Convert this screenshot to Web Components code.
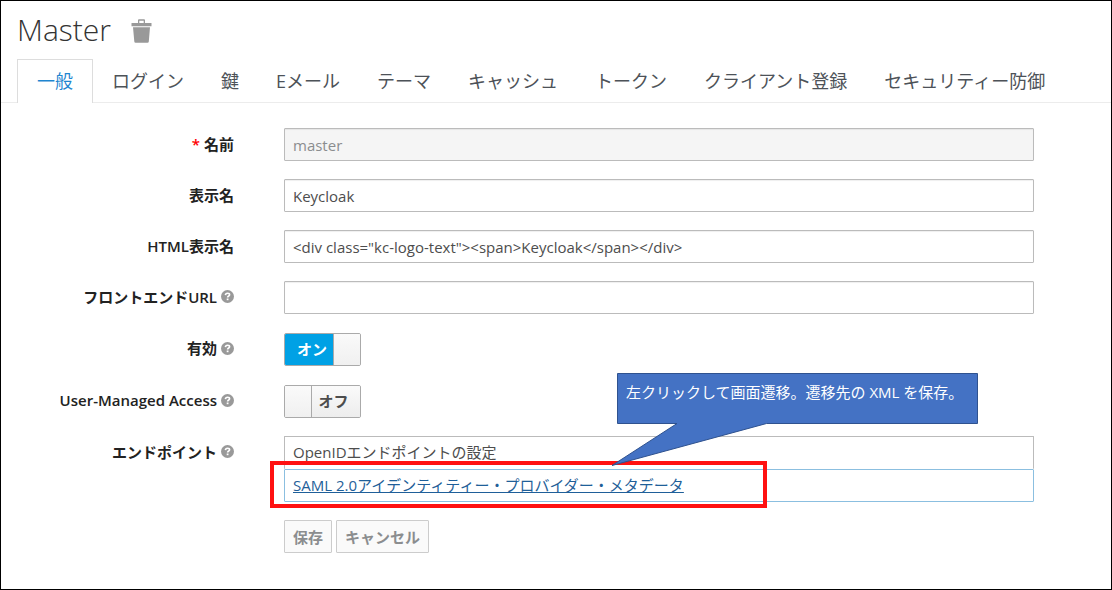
<!DOCTYPE html>
<html lang="ja">
<head>
<meta charset="utf-8">
<meta name="viewport" content="width=device-width, initial-scale=1">
<title>Master - Keycloak</title>
<style>
  html { height: 100%; }
  body {
    margin: 0;
    min-height: 100%;
    display: flex;
    background: #fff;
    color: #222;
    font: 15px/20px "Open Sans", "Noto Sans CJK JP", sans-serif;
  }
</style>
</head>
<body>
<kc-page>
  <kc-heading slot="head">Master</kc-heading>
  <kc-tabs slot="head">
    <kc-tab active>一般</kc-tab>
    <kc-tab>ログイン</kc-tab>
    <kc-tab>鍵</kc-tab>
    <kc-tab>Eメール</kc-tab>
    <kc-tab>テーマ</kc-tab>
    <kc-tab>キャッシュ</kc-tab>
    <kc-tab>トークン</kc-tab>
    <kc-tab>クライアント登録</kc-tab>
    <kc-tab>セキュリティー防御</kc-tab>
  </kc-tabs>
  <kc-text-field label="名前" value="master" required disabled></kc-text-field>
  <kc-text-field label="表示名" value="Keycloak"></kc-text-field>
  <kc-text-field label="HTML表示名" value="&lt;div class=&quot;kc-logo-text&quot;&gt;&lt;span&gt;Keycloak&lt;/span&gt;&lt;/div&gt;"></kc-text-field>
  <kc-text-field label="フロントエンドURL" value="" help></kc-text-field>
  <kc-switch-field label="有効" checked help></kc-switch-field>
  <kc-switch-field label="User-Managed Access" help></kc-switch-field>
  <kc-endpoints label="エンドポイント" help>
    <kc-endpoint>OpenIDエンドポイントの設定</kc-endpoint>
    <kc-endpoint marked>SAML 2.0アイデンティティー・プロバイダー・メタデータ
      <kc-callout slot="note">左クリックして画面遷移。遷移先の XML を保存。</kc-callout>
    </kc-endpoint>
  </kc-endpoints>
  <kc-actions>
    <kc-button>保存</kc-button>
    <kc-button>キャンセル</kc-button>
  </kc-actions>
</kc-page>

<script>
const define = (name, render, base = HTMLElement) =>
  customElements.define(name, class extends base {
    connectedCallback() {
      if (this.shadowRoot) return;
      const t = document.createElement('template');
      t.innerHTML = render(this);
      this.attachShadow({ mode: 'open' }).append(t.content.cloneNode(true));
    }
  });

const esc = s => (s || '').replace(/&/g, '&amp;').replace(/"/g, '&quot;').replace(/</g, '&lt;');

/* Shared two-column row: right-aligned label, then the control. */
const rowStyle = `
  :host { display: grid; grid-template-columns: 216px minmax(0, 1fr); column-gap: 50px; align-items: center; min-height: 33px; }
  *, *::before, *::after { box-sizing: border-box; }
  .label { display: flex; justify-content: flex-end; align-items: center; gap: 4px; min-height: 33px; padding-bottom: 2px; font-weight: 600; color: #222; }
  .label b { color: #f00; font-weight: 600; }
  .label svg { width: 13px; height: 13px; flex: none; }
`;
const labelText = el => `${el.hasAttribute('required') ? '<b>*</b>' : ''}<span>${esc(el.getAttribute('label'))}</span>${el.hasAttribute('help') ? `
  <svg viewBox="0 0 13 13" aria-hidden="true"><circle cx="6.5" cy="6.5" r="6.5" fill="#999"/><path d="M4.4 5.1C4.5 3.8 5.4 3.2 6.6 3.2 7.8 3.2 8.6 3.9 8.6 4.8 8.6 6.1 6.6 6 6.6 7.6" fill="none" stroke="#fff" stroke-width="1.6"/><rect x="5.7" y="8.5" width="1.8" height="1.7" fill="#fff"/></svg>` : ''}`;

define('kc-page', () => `
  <style>
    :host { flex: 1; display: block; box-sizing: border-box; border: 1px solid #000; }
    form { display: grid; row-gap: 18px; padding: 25px 77px 0 17px; }
  </style>
  <header><slot name="head"></slot></header>
  <form><slot></slot></form>`);

define('kc-heading', () => `
  <style>
    :host { display: flex; align-items: center; gap: 20px; padding: 9px 16px; }
    h1 { margin: 0; font-size: 30px; line-height: 40px; font-weight: 300; color: #333; }
    button { border: 0; padding: 2px 0 0; background: none; display: flex; }
    svg { width: 21px; height: 24px; }
  </style>
  <h1><slot></slot></h1>
  <button type="button" aria-label="削除"><svg viewBox="0 0 21 24"><path fill="#999" fill-rule="evenodd" d="M.5 4H7V1.3Q7 .3 8 .3H13Q14 .3 14 1.3V4H20.5V7.3H.5ZM8.3 1.8V4H12.7V1.8ZM2 8.3H19L17.8 22.5Q17.7 23.7 16.5 23.7H4.6Q3.4 23.7 3.3 22.5Z"/></svg></button>`);

define('kc-tabs', () => `
  <style>
    :host { display: block; padding-left: 16px; border-bottom: 1px solid #ececec; }
    nav { display: flex; gap: 1px; margin-bottom: -1px; }
  </style>
  <nav><slot></slot></nav>`);

define('kc-tab', () => `
  <style>
    :host { display: block; flex: none; }
    a { display: block; padding: 0 17px; border: 1px solid transparent; border-bottom: 0; font-size: 18px; line-height: 43px; color: #4d5258; text-decoration: none; white-space: nowrap; }
    :host([active]) a { padding: 0 19px; border-color: #ddd; background: #fff; color: #1f86d0; }
  </style>
  <a href="#"><slot></slot></a>`);

define('kc-text-field', el => `
  <style>${rowStyle}
    input { width: 100%; height: 33px; margin: 0; padding: 0 8px; border: 1px solid #bbb; border-radius: 1px; background: #fff; color: #4d4d4d; font: inherit; box-shadow: inset 0 1px 1px #0001; }
    input:disabled { background: #f5f5f5; color: #8b8d8f; }
  </style>
  <label class="label" for="field">${labelText(el)}</label>
  <input id="field" type="text" value="${esc(el.getAttribute('value'))}" ${el.hasAttribute('disabled') ? 'disabled' : ''}>`);

define('kc-switch-field', el => {
  const on = el.hasAttribute('checked');
  return `
  <style>${rowStyle}
    :host { min-height: 34px; }
    .switch { position: relative; display: grid; grid-template-columns: ${on ? '48px 28px' : '27px 49px'}; width: 77px; height: 33px; border: 1px solid #aaa; border-radius: 2px; overflow: hidden; font-weight: 600; line-height: 30px; text-align: center; }
    .switch input { position: absolute; inset: 0; width: 100%; height: 100%; margin: 0; opacity: 0; }
    .text { color: ${on ? '#fff' : '#4d4d4d'}; background: ${on ? '#00a1e5' : 'linear-gradient(#fafafa, #ededed)'}; ${on ? 'padding-left: 6px' : 'padding-right: 6px'}; }
    .knob { background: linear-gradient(#fafafa, #f0f0f0); border-${on ? 'left' : 'right'}: 1px solid #aaa; }
  </style>
  <label class="label" for="field">${labelText(el)}</label>
  <span class="switch">
    ${on ? '<span class="text">オン</span><span class="knob"></span>' : '<span class="knob"></span><span class="text">オフ</span>'}
    <input id="field" type="checkbox" role="switch" ${on ? 'checked' : ''}>
  </span>`;
});

define('kc-endpoints', el => `
  <style>${rowStyle}
    :host { align-items: start; }
  </style>
  <span class="label" id="name">${labelText(el)}</span>
  <div role="group" aria-labelledby="name"><slot></slot></div>`);

define('kc-endpoint', el => `
  <style>
    :host { display: block; position: relative; }
    a { display: block; box-sizing: border-box; height: 33px; padding: 0 8px; border: 1px solid #bbb; border-bottom: 0; border-radius: 1px; line-height: 31px; color: #4d4d4d; text-decoration: none; }
    :host([marked]) a { border: 1px solid #8bbfe0; color: #1f5f99; text-decoration: underline; }
    .mark { display: none; position: absolute; left: -14px; top: -8px; width: 497px; height: 47px; box-sizing: border-box; border: 4px solid #f11; pointer-events: none; }
    :host([marked]) .mark { display: block; }
    ::slotted(kc-callout) { position: absolute; left: 327px; bottom: 34px; }
  </style>
  <a href="#"><slot></slot></a>
  <span class="mark"></span>
  <slot name="note"></slot>`);

/* Speech bubble whose tail points down and to the left. */
define('kc-callout', () => `
  <style>
    :host { display: block; width: 368px; height: 95px; color: #fff; }
    svg { position: absolute; inset: 0; width: 100%; height: 100%; }
    p { position: relative; margin: 0; padding: 8px 0 0 15px; line-height: 22px; white-space: nowrap; }
  </style>
  <svg viewBox="0 0 368 95" aria-hidden="true"><path d="M6.5 .5H366.5V50.5H155.5L1 92.5 66 50.5H6.5Z" fill="#4472c4" stroke="#2f528f"/></svg>
  <p><slot></slot></p>`);

define('kc-actions', () => `
  <style>
    :host { display: flex; gap: 4px; padding-left: 266px; }
  </style>
  <slot></slot>`);

define('kc-button', () => `
  <style>
    button { display: block; height: 33px; padding: 0 8px; border: 1px solid #ccc; border-radius: 1px; background: #fafafa; color: #8b8d8f; font: inherit; font-weight: 600; }
  </style>
  <button type="button" disabled><slot></slot></button>`);
</script>
</body>
</html>
